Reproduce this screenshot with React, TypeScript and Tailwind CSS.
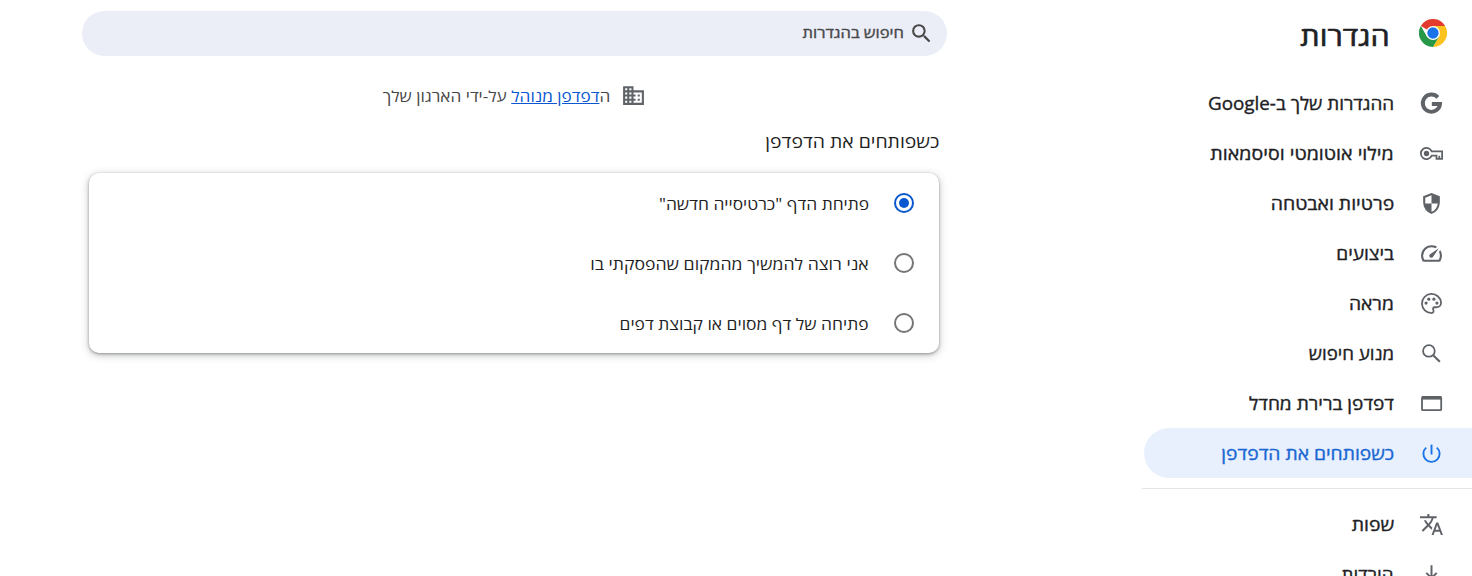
import React, { useState } from "react";
import { MdDomain, MdSearch, MdTranslate } from "react-icons/md";

interface MenuItem {
  id: string;
  label: string;
  stretch: string;
  icon: React.ReactNode;
}

const iconClass = "h-[25px] w-[25px] shrink-0";

const ChromeLogo = () => (
  <svg viewBox="0 0 48 48" className="h-7 w-7 shrink-0">
    <path fill="#e33b2e" d="M24 24L3.2 12A24 24 0 0 1 44.8 12L24 12Z" />
    <path fill="#fcc31e" d="M44.8 12A24 24 0 0 1 24 48L34.4 30L24 12Z" />
    <path fill="#279847" d="M24 48A24 24 0 0 1 3.2 12L13.6 30L34.4 30Z" />
    <circle cx="24" cy="24" r="12" fill="#fff" />
    <circle cx="24" cy="24" r="9.7" fill="#1a73e8" />
  </svg>
);

const GoogleIcon = () => (
  <svg viewBox="0 0 24 24" className={iconClass} fill="none" stroke="currentColor" strokeWidth="3.7">
    <path d="M18.1 6.1A8.3 8.3 0 1 0 20.2 12.5H12.3" />
  </svg>
);

const KeyIcon = () => (
  <svg viewBox="0 0 24 24" className={iconClass} fill="none" stroke="currentColor" strokeWidth="1.7">
    <path d="M12.2 10H22.2V17.2H16.8V14H12.2A5.4 5.4 0 1 1 12.2 10Z" />
    <path d="M19.5 17.2V14.2" />
    <circle cx="7.2" cy="12" r="2.6" fill="currentColor" stroke="none" />
  </svg>
);

const ShieldIcon = () => (
  <svg viewBox="0 -960 960 960" className={iconClass} fill="currentColor">
    <path d="M480-80q-139-35-229.5-159.5T160-516v-244l320-120 320 120v244q0 152-90.5 276.5T480-80Zm0-84q97-30 162-118.5T718-480H480v-315l-240 90v207q0 7 2 18h238v316Z" />
  </svg>
);

const SpeedIcon = () => (
  <svg viewBox="0 -960 960 960" className={iconClass} fill="currentColor">
    <path d="M418-340q24 24 62 23.5t56-27.5l224-336-336 224q-27 18-28.5 55t22.5 61Zm62-460q59 0 113.5 16.5T696-734l-76 48q-33-17-68.5-25.5T480-720q-133 0-226.5 93.5T160-400q0 42 11.5 83t32.5 77h552q23-38 33.5-79t10.5-85q0-36-8.5-70T766-540l48-76q30 47 47.5 100T880-404q1 57-13 109t-41 99q-11 18-30 27t-40 9H204q-21 0-40-9t-30-27q-26-45-40-95.5T80-400q0-83 31.5-155.5t86-127Q252-737 325-768.5T480-800Z" />
  </svg>
);

const PaletteIcon = () => (
  <svg viewBox="0 0 24 24" className={iconClass} fill="currentColor">
    <path
      d="M12 21.2A9.2 9.2 0 1 1 21.2 11.2C21.2 14 19 15.6 16.6 15.6H14.9C13.6 15.6 13 16.9 13.7 18C14.5 19.4 13.8 21.2 12 21.2Z"
      fill="none"
      stroke="currentColor"
      strokeWidth="1.7"
    />
    <circle cx="6.8" cy="11.6" r="1.5" />
    <circle cx="9.4" cy="7.8" r="1.5" />
    <circle cx="14.3" cy="7.8" r="1.5" />
    <circle cx="17.2" cy="11.6" r="1.5" />
  </svg>
);

const MagnifierIcon = () => (
  <svg viewBox="0 0 24 24" className={iconClass} fill="none" stroke="currentColor" strokeWidth="1.7">
    <circle cx="9.5" cy="9.5" r="5.6" />
    <path d="M13.6 13.6L20 20" strokeWidth="2" />
  </svg>
);

const WindowIcon = () => (
  <svg viewBox="0 0 25 25" className={iconClass}>
    <rect x="3" y="6" width="19.2" height="13.2" rx="1" fill="none" stroke="currentColor" strokeWidth="1.8" />
    <path d="M3 5.2H22.2V8.6H3Z" fill="currentColor" />
  </svg>
);

const PowerIcon = () => (
  <svg viewBox="0 0 25 25" className={iconClass} fill="none" stroke="currentColor" strokeWidth="1.9">
    <path d="M12.5 3.6V13.5" />
    <path d="M7.2 6.6A8.1 8.1 0 1 0 17.8 6.6" />
  </svg>
);

const DownloadIcon = () => (
  <svg viewBox="0 0 24 24" className={iconClass} fill="none" stroke="currentColor" strokeWidth="1.9">
    <path d="M12 3V15.4M7 10.4L12 15.4L17 10.4M5 15V19H19V15" />
  </svg>
);

const mainItems: MenuItem[] = [
  { id: "google", label: "ההגדרות שלך ב-Google", stretch: "scale-x-[1.075]", icon: <GoogleIcon /> },
  { id: "autofill", label: "מילוי אוטומטי וסיסמאות", stretch: "scale-x-[1.12]", icon: <KeyIcon /> },
  { id: "privacy", label: "פרטיות ואבטחה", stretch: "scale-x-[1.11]", icon: <ShieldIcon /> },
  { id: "performance", label: "ביצועים", stretch: "scale-x-[1.09]", icon: <SpeedIcon /> },
  { id: "appearance", label: "מראה", stretch: "scale-x-[1.1]", icon: <PaletteIcon /> },
  { id: "search", label: "מנוע חיפוש", stretch: "scale-x-[1.065]", icon: <MagnifierIcon /> },
  { id: "default", label: "דפדפן ברירת מחדל", stretch: "scale-x-[1.09]", icon: <WindowIcon /> },
  { id: "startup", label: "כשפותחים את הדפדפן", stretch: "scale-x-[1.1]", icon: <PowerIcon /> },
];

const moreItems: MenuItem[] = [
  { id: "languages", label: "שפות", stretch: "scale-x-[1.11]", icon: <MdTranslate className={iconClass} /> },
  { id: "downloads", label: "הורדות", stretch: "scale-x-[1.07]", icon: <DownloadIcon /> },
];

const startupOptions = [
  { id: "newtab", label: 'פתיחת הדף "כרטיסייה חדשה"', stretch: "scale-x-[1.123]" },
  { id: "continue", label: "אני רוצה להמשיך מהמקום שהפסקתי בו", stretch: "scale-x-[1.138]" },
  { id: "specific", label: "פתיחה של דף מסוים או קבוצת דפים", stretch: "scale-x-[1.124]" },
];

const App: React.FC = () => {
  const [active, setActive] = useState("startup");
  const [option, setOption] = useState("newtab");

  const renderItem = (item: MenuItem) => (
    <button
      key={item.id}
      onClick={() => setActive(item.id)}
      className={`flex h-[50px] w-[328px] items-center gap-[25px] rounded-l-full pr-7 text-[17.5px] [-webkit-text-stroke:0.35px] ${
        active === item.id ? "bg-[#e8f0fe] text-[#1967d2]" : "text-[#202124]"
      }`}
    >
      <span className={active === item.id ? "text-[#1a73e8]" : "text-[#5f6368]"}>{item.icon}</span>
      <span className={`origin-right whitespace-nowrap ${item.stretch}`}>{item.label}</span>
    </button>
  );

  return (
    <div
      dir="rtl"
      className="flex h-[576px] overflow-hidden bg-white font-['Open_Sans','Noto_Sans',sans-serif] text-[#1f1f1f]"
    >
      {/* Side menu */}
      <aside className="w-[330px] shrink-0">
        <header className="flex h-[78px] items-start gap-[29px] pt-[19px] pr-[25px]">
          <ChromeLogo />
          <h1 className="origin-right scale-x-[1.15] text-[26.5px] leading-[34px] text-[#202124] [-webkit-text-stroke:0.6px]">
            הגדרות
          </h1>
        </header>
        <nav>
          {mainItems.map(renderItem)}
          <div className="mt-[10px] mb-[10px] h-px bg-[#e4e5e7]" />
          {moreItems.map(renderItem)}
        </nav>
      </aside>

      {/* Settings content */}
      <main className="mr-[195px] w-[865px] shrink-0 pt-[11px]">
        <div className="flex h-[45px] items-center gap-[5px] rounded-full bg-[#ebeef7] pr-[13px] text-[#474747]">
          <MdSearch className="h-[25px] w-[25px]" />
          <span className="origin-right scale-x-[1.14] pb-px text-[14.5px] [-webkit-text-stroke:0.35px]">
            חיפוש בהגדרות
          </span>
        </div>

        <div className="mt-[27px] flex h-[25px] items-center justify-center gap-[10px] pr-[2px] text-[15px] text-[#474747]">
          <MdDomain className="h-[25px] w-[25px] text-[#5f6368]" />
          <div className="w-[229px] pt-[2px]">
            <p className="w-max origin-right scale-x-[1.148] whitespace-nowrap">
              ה<a className="text-[#0b57d0] underline">דפדפן מנוהל</a> על-ידי הארגון שלך
            </p>
          </div>
        </div>

        <h2 className="mt-[19px] w-max origin-right scale-x-[1.108] pr-[7px] text-[17.5px] leading-7">
          כשפותחים את הדפדפן
        </h2>

        <section className="mt-[18px] mr-2 w-[850px] rounded-[10px] bg-white shadow-[0_1px_3px_rgba(60,64,67,0.45),0_2px_8px_rgba(60,64,67,0.3)]">
          {startupOptions.map((o) => (
            <label key={o.id} className="flex h-[60px] items-center gap-[25px] pr-[25px] text-[15.5px]">
              <input
                type="radio"
                name="startup"
                className="peer sr-only"
                checked={option === o.id}
                onChange={() => setOption(o.id)}
              />
              <span
                className={`flex h-5 w-5 items-center justify-center rounded-full border-2 ${
                  option === o.id ? "border-[#0b57d0]" : "border-[#747775]"
                }`}
              >
                {option === o.id && <span className="h-[10px] w-[10px] rounded-full bg-[#0b57d0]" />}
              </span>
              <span className={`origin-right pt-1 whitespace-nowrap ${o.stretch}`}>{o.label}</span>
            </label>
          ))}
        </section>
      </main>
    </div>
  );
};

export default App;
